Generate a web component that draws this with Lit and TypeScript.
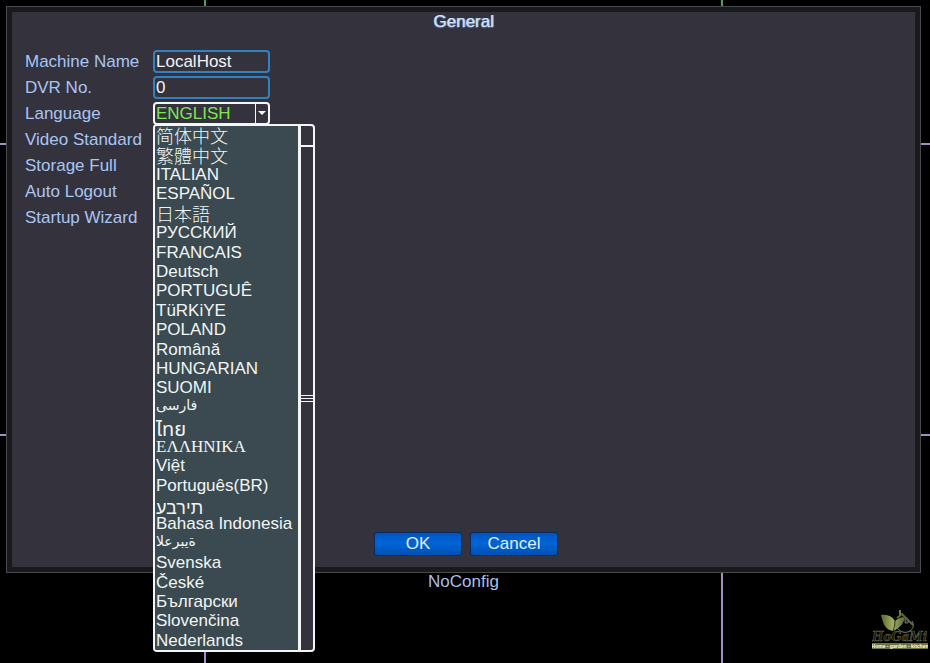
import { LitElement, html, css, svg } from "lit";
import { customElement, property, state } from "lit/decorators.js";
import { classMap } from "lit/directives/class-map.js";

interface Language {
  name: string;
  script?: "cjk" | "arabic" | "thai" | "greek" | "hebrew";
  lang?: string;
  ltr?: boolean;
}

const LANGUAGES: Language[] = [
  { name: "简体中文", script: "cjk", lang: "zh-Hans" },
  { name: "繁體中文", script: "cjk", lang: "zh-Hant" },
  { name: "ITALIAN" },
  { name: "ESPAÑOL" },
  { name: "日本語", script: "cjk", lang: "ja" },
  { name: "РУССКИЙ" },
  { name: "FRANCAIS" },
  { name: "Deutsch" },
  { name: "PORTUGUÊ" },
  { name: "TüRKiYE" },
  { name: "POLAND" },
  { name: "Română" },
  { name: "HUNGARIAN" },
  { name: "SUOMI" },
  { name: "فارسى", script: "arabic", lang: "fa" },
  { name: "ไทย", script: "thai", lang: "th" },
  { name: "ΕΛΛΗΝΙΚΑ", script: "greek", lang: "el" },
  { name: "Việt" },
  { name: "Português(BR)" },
  { name: "עברית", script: "hebrew", lang: "he", ltr: true },
  { name: "Bahasa Indonesia" },
  { name: "العربية", script: "arabic", lang: "ar", ltr: true },
  { name: "Svenska" },
  { name: "České" },
  { name: "Български" },
  { name: "Slovenčina" },
  { name: "Nederlands" },
];

/* Camera grid that stays visible behind the dialog. */
@customElement("camera-grid")
export class CameraGrid extends LitElement {
  static styles = css`
    :host {
      display: grid;
      grid-template-columns: 222fr 555fr 223fr;
      grid-template-rows: 219fr 439fr 342fr;
    }
    .cell {
      border: 0 solid #a58cc4;
    }
    .right {
      border-right-width: 2px;
    }
    .bottom {
      border-bottom-width: 2px;
    }
    .live {
      border-right-color: #4f9a5c;
    }
  `;

  render() {
    return Array.from({ length: 9 }, (_, i) => {
      const classes = {
        cell: true,
        right: i % 3 < 2,
        bottom: i < 6,
        live: i < 3,
      };
      return html`<div class=${classMap(classes)}></div>`;
    });
  }
}

/* Open list of languages with its scroll bar. */
@customElement("language-list")
export class LanguageList extends LitElement {
  @property() value = "";

  static styles = css`
    :host {
      display: flex;
      box-sizing: border-box;
      border: 2px solid #f4f6f6;
      border-radius: 4px;
      background: #33323d;
      overflow: hidden;
    }
    .list {
      flex: 1;
      display: flex;
      flex-direction: column;
      margin: 0;
      padding: 0 0 0 1px;
      list-style: none;
      background: #3a4a50;
    }
    .item {
      flex: 1 1 0;
      min-height: 0;
      display: flex;
      align-items: center;
      line-height: 19px;
      white-space: nowrap;
      cursor: pointer;
    }
    .cjk {
      font-family: "Noto Sans CJK SC", sans-serif;
      font-size: 18px;
      font-weight: 300;
    }
    .arabic {
      font-family: "DejaVu Sans", sans-serif;
      font-size: 14px;
      align-items: flex-start;
      line-height: 15px;
    }
    .thai {
      font-family: "Noto Sans Thai", "Noto Serif Thai", "Liberation Serif", serif;
      font-size: 20px;
      align-items: flex-start;
      line-height: 26px;
    }
    .greek {
      font-family: "Liberation Serif", serif;
    }
    .hebrew {
      font-family: "Liberation Sans", sans-serif;
      font-size: 18px;
      align-items: flex-start;
      line-height: 26px;
    }
    .override {
      direction: ltr;
      unicode-bidi: bidi-override;
    }
    .scroll {
      width: 12px;
      display: flex;
      flex-direction: column;
      border-left: 3px solid #f4f6f6;
    }
    .thumb {
      height: 19px;
      border-bottom: 2px solid #f4f6f6;
    }
    .track {
      flex: 1;
      display: grid;
      place-content: center stretch;
      gap: 2px;
    }
    .grip {
      height: 1px;
      background: #f4f6f6;
    }
  `;

  private pick(name: string) {
    this.dispatchEvent(new CustomEvent("pick", { detail: name }));
  }

  render() {
    return html`
      <ul class="list" role="listbox" aria-label="Language">
        ${LANGUAGES.map(
          (l) => html`<li
            class="item ${l.script ?? ""}"
            role="option"
            lang=${l.lang ?? "en"}
            aria-selected=${l.name === this.value}
            @click=${() => this.pick(l.name)}
          ><span class=${classMap({ override: !!l.ltr })}>${l.name}</span></li>`
        )}
      </ul>
      <div class="scroll">
        <div class="thumb"></div>
        <div class="track">
          <div class="grip"></div>
          <div class="grip"></div>
          <div class="grip"></div>
        </div>
      </div>
    `;
  }
}

const logo = svg`
  <defs>
    <linearGradient id="leaf" x1="0" x2="1" y1="0" y2="0">
      <stop offset="0" stop-color="#566b25" />
      <stop offset="0.5" stop-color="#a3ad68" />
      <stop offset="1" stop-color="#54652a" />
    </linearGradient>
  </defs>
  <path d="M9 6 C15 5 20 7 23 12 C25 10 29 8 33 8 C32 14 28 19 21 22 C13 21 11 14 9 6 Z" fill="url(#leaf)" />
  <path d="M23 12 C23 16 22 19 21 22" fill="none" stroke="#2c3714" />
  <path d="M25 9 L30 5 L41 16" fill="none" stroke="#5b6b35" stroke-width="2" />
  <path d="M28 1 V6" stroke="#6d8038" stroke-width="2" />
  <path d="M33 10 H36 V14 H33 Z" fill="#29312c" stroke="#68716a" />
  <path d="M23 16 C27 23 33 25 38 22 C42 19 42 15 40 12" fill="none" stroke="#767e79" />
  <text x="0" y="32" class="brand">HoGaMi</text>
  <rect x="0" y="34" width="56" height="6" fill="#68733f" />
  <text x="28" y="39" class="motto">Home - garden - kitchen</text>
`;

@customElement("app-root")
export class AppRoot extends LitElement {
  @state() private language = "ENGLISH";

  static styles = css`
    :host {
      display: flex;
      flex-direction: column;
      position: relative;
      box-sizing: border-box;
      min-height: 100vh;
      padding: 6px 9px 0 6px;
      background: #000;
      color: #f2f5f5;
      font: 17px/20px "Liberation Sans", Arial, "Noto Sans CJK SC", sans-serif;
    }
    .cameras {
      position: absolute;
      inset: 0;
    }
    .dialog {
      position: relative;
      flex: 1;
      display: flex;
      flex-direction: column;
      border: 1px solid #4a4950;
      background: #33323d;
      box-shadow: inset 0 0 0 5px #1a1a1b;
      padding: 5px 18px 16px;
    }
    .title {
      margin: 0 0 18px;
      font-size: 17px;
      line-height: 20px;
      font-weight: 400;
      text-align: center;
      color: #d3e2fb;
      text-shadow: 1px 0 #8fa9d6, 0 1px 1px #5f7db3;
    }
    .form {
      flex: 1;
      display: grid;
      grid-template-columns: 128px 117px;
      grid-auto-rows: 23px;
      row-gap: 3px;
      align-items: center;
      align-content: start;
      margin: 0;
    }
    .label {
      grid-column: 1;
      color: #aac5f2;
      line-height: 20px;
      white-space: nowrap;
    }
    .field {
      box-sizing: border-box;
      width: 100%;
      height: 23px;
      margin: 0;
      padding: 0 1px;
      border: 2px solid #3182bd;
      border-radius: 4px;
      background: #33323d;
      color: inherit;
      font: inherit;
      outline: none;
    }
    .combo {
      position: relative;
      display: grid;
    }
    .select {
      appearance: none;
      border-color: #f4f6f6;
      color: #7fe650;
    }
    .arrow {
      position: absolute;
      inset: 2px 2px 2px auto;
      width: 12px;
      display: grid;
      place-items: center;
      border-left: 1px solid #f4f6f6;
      pointer-events: none;
    }
    .menu {
      position: absolute;
      top: 22px;
      left: 0;
      width: 162px;
      height: 528px;
      z-index: 1;
    }
    .actions {
      display: flex;
      justify-content: center;
      gap: 8px;
      padding-left: 5px;
    }
    .button {
      width: 88px;
      height: 24px;
      padding: 0;
      border: 1px solid #092c5c;
      border-radius: 3px;
      background: linear-gradient(#0054bf, #0065d8 45%, #0050b2);
      color: #e3eefc;
      font: inherit;
    }
    .status {
      position: relative;
      height: 90px;
      line-height: 18px;
      text-align: center;
      color: #a9bfe6;
    }
    .logo {
      position: absolute;
      right: 2px;
      bottom: 13px;
      width: 56px;
      height: 41px;
    }
    .brand {
      font: italic bold 12px "DejaVu Serif", serif;
      fill: #14180f;
      stroke: #6b7158;
      stroke-width: 0.5px;
    }
    .motto {
      font: bold 5px "Liberation Sans", sans-serif;
      fill: #fff;
      text-anchor: middle;
    }
  `;

  render() {
    return html`
      <camera-grid class="cameras"></camera-grid>
      <main class="dialog">
        <h1 class="title">General</h1>
        <form class="form" @submit=${(e: Event) => e.preventDefault()}>
          <label class="label" for="machine">Machine Name</label>
          <input class="field" id="machine" type="text" value="LocalHost" />
          <label class="label" for="dvr">DVR No.</label>
          <input class="field" id="dvr" type="text" value="0" />
          <label class="label" for="language">Language</label>
          <div class="combo">
            <select class="field select" id="language">
              <option>${this.language}</option>
            </select>
            <span class="arrow">
              <svg width="8" height="5" viewBox="0 0 8 5">
                <path d="M0 0 H8 L4 4 Z" fill="#f4f6f6" />
              </svg>
            </span>
            <language-list
              class="menu"
              .value=${this.language}
              @pick=${(e: CustomEvent<string>) => (this.language = e.detail)}
            ></language-list>
          </div>
          <span class="label">Video Standard</span>
          <span class="label">Storage Full</span>
          <span class="label">Auto Logout</span>
          <span class="label">Startup Wizard</span>
        </form>
        <div class="actions">
          <button class="button" type="button">OK</button>
          <button class="button" type="button">Cancel</button>
        </div>
      </main>
      <footer class="status">NoConfig</footer>
      <svg class="logo" viewBox="0 0 56 41" role="img" aria-label="HoGaMi">${logo}</svg>
    `;
  }
}
